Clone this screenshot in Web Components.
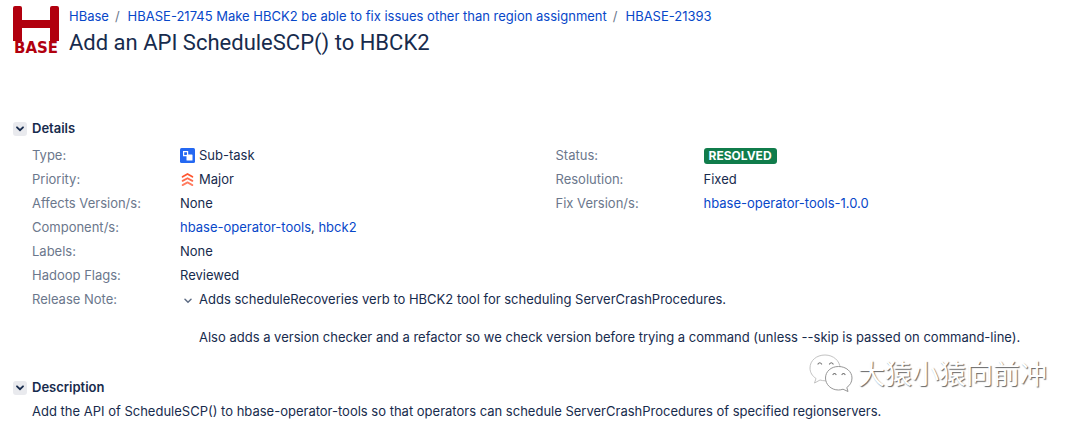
<!DOCTYPE html>
<html lang="en">
<head>
<meta charset="utf-8">
<title>HBASE-21393</title>
<style>
body{margin:0;background:#fff;color:#172b4d;font:13px/19px Inter,"Noto Sans",sans-serif}
</style>
</head>
<body>
<issue-page></issue-page>
<script>
const define=(name,html)=>{
  const t=document.createElement('template');
  t.innerHTML=html;
  customElements.define(name,class extends HTMLElement{
    constructor(){
      super();
      this.attachShadow({mode:'open'}).append(t.content.cloneNode(true));
    }
  });
};

define('hbase-logo',`<style>
:host{display:flex;flex-direction:column;width:46px;color:#b1000e}
svg{display:block;width:46px;height:35px}
span{font:700 15px/15px "DejaVu Sans",sans-serif;text-align:center}
</style>
<svg viewBox="0 0 46 35" aria-hidden="true"><path fill="currentColor" d="M2 0h5q2 0 2 2v12h28V2q0-2 2-2h5q2 0 2 2v33h-9V22H9v13H0V2q0-2 2-2z"/></svg>
<span>BASE</span>`);

define('text-link',`<style>
:host{display:inline}
a{color:#0747c9;text-decoration:none}
a:hover{text-decoration:underline}
</style><a href="#"><slot></slot></a>`);

define('issue-header',`<style>
:host{display:flex;gap:10px;align-items:flex-start}
hbase-logo{flex:none}
nav{display:flex;gap:8px;line-height:20px}
.sep{color:#6b778c;margin-left:-2px}
h1{margin:0;font:400 22px/34px Roboto,sans-serif}
</style>
<hbase-logo></hbase-logo>
<div>
<nav aria-label="Breadcrumb"><text-link>HBase</text-link><span class="sep">/</span><text-link>HBASE-21745 Make HBCK2 be able to fix issues other than region assignment</text-link><span class="sep">/</span><text-link>HBASE-21393</text-link></nav>
<h1><slot></slot></h1>
</div>`);

define('issue-section',`<style>
:host{display:block;position:relative}
header{display:flex;align-items:center;gap:5px}
button{display:flex;align-items:center;justify-content:center;width:14px;height:14px;padding:0;border:0;border-radius:3px;background:#e9eaee;color:#172b4d}
h2{margin:0;font-size:13px;line-height:19px;font-weight:600}
.body{padding:5px 0 0 19px}
</style>
<header><button type="button" aria-label="Toggle section"><svg width="8" height="6" viewBox="0 0 8 6" aria-hidden="true"><path d="M1 1.3 4 4.2 7 1.3" fill="none" stroke="currentColor" stroke-width="1.8" stroke-linecap="round"/></svg></button><h2><slot name="heading"></slot></h2></header>
<div class="body"><slot></slot></div>`);

define('issue-field',`<style>
:host{display:grid;grid-template-columns:148px 1fr}
.label{color:#6b778c}
.value{display:flex;gap:4px;align-items:center}
</style>
<span class="label" id="label"><slot name="label"></slot></span>
<div class="value" role="group" aria-labelledby="label"><slot></slot></div>`);

define('subtask-icon',`<style>:host,svg{display:block}</style>
<svg width="15" height="15" viewBox="0 0 15 15" aria-hidden="true"><rect width="15" height="15" rx="1.5" fill="#2468f2"/><path d="M3.6 3.6h4v4h-4z" fill="none" stroke="#fff" stroke-width="1.2"/><rect x="6.5" y="6.5" width="6" height="6" rx=".6" fill="#fff"/></svg>`);

define('major-icon',`<style>:host,svg{display:block}</style>
<svg width="15" height="15" viewBox="0 0 15 15" aria-hidden="true"><g fill="none" stroke-width="1.8" stroke-linecap="round" stroke-linejoin="round"><path stroke="#ff5630" d="M2.6 4.7 7.5 2l4.9 2.7"/><path stroke="#ff6b4c" d="M2.6 8.9 7.5 6.2l4.9 2.7"/><path stroke="#ff7d62" d="M2.6 13.1 7.5 10.4l4.9 2.7"/></g></svg>`);

define('status-badge',`<style>
:host{display:block;padding:0 5px;border-radius:3px;background:#107c4b;color:#fff;font-size:12px;line-height:16px;font-weight:700}
</style><slot></slot>`);

define('release-note',`<style>
:host{display:grid;grid-template-columns:15px 1fr;gap:4px}
button{display:flex;align-items:center;justify-content:center;height:19px;padding:2px 0 0;border:0;background:none;color:#5e6c84}
p{margin:0 0 19px}
p:last-child{margin:0}
</style>
<button type="button" aria-label="Toggle release note"><svg width="8" height="6" viewBox="0 0 8 6" aria-hidden="true"><path d="M1 1.3 4 4.2 7 1.3" fill="none" stroke="currentColor" stroke-width="1.5" stroke-linecap="round"/></svg></button>
<div><p>Adds scheduleRecoveries verb to HBCK2 tool for scheduling ServerCrashProcedures.</p><p>Also adds a version checker and a refactor so we check version before trying a command (unless --skip is passed on command-line).</p></div>`);

define('channel-watermark',`<style>
:host{display:flex;align-items:center;gap:5px;color:#fff;font:27px/36px "Noto Sans CJK SC",sans-serif;text-shadow:1px 1px 1px #666;white-space:nowrap}
svg{display:block}
</style>
<svg width="44" height="38" viewBox="0 0 44 38" aria-hidden="true"><g fill="#fff" stroke="#8a8a8a" stroke-width=".9" stroke-linejoin="round"><path d="M16 1C7.500 1 1 6.500 1 14c0 4.500 2.300 8 6 10.500L5.500 29l5.500-3c1.700.5 3.500.8 5.500.8C25 26.800 31 21 31 14S24.500 1 16 1z" stroke="#bbb"/><path d="M29.500 12.500c-7.500 0-13 5-13 11.500s5.500 12 13 12c1.700 0 3-.3 4.500-.8l5 2.300-1.200-4C41 31.300 43 28 43 24c0-6.500-6-11.500-13.500-11.500z"/></g><g fill="none" stroke="#777" stroke-width="1.200" stroke-linecap="round"><path d="M9 10q1.800-2.500 3.600 0M20.500 10q1.800-2.500 3.600 0M24 20.500q1.500-2 3 0M33 20.500q1.500-2 3 0"/></g></svg>
<span lang="zh">大猿小猿向前冲</span>`);

define('issue-page',`<style>
:host{display:block;padding:6px 13px 0}
.details{margin-top:59px}
.columns{display:grid;grid-template-columns:1fr 1fr;column-gap:12px;align-items:start}
.list{display:grid;gap:5px;padding-top:3px}
.note{margin-top:5px}
.description{margin-top:31px}
channel-watermark{position:absolute;right:20px;top:-24px}
p{margin:0}
</style>
<issue-header>Add an API ScheduleSCP() to HBCK2</issue-header>
<main>
<issue-section class="details"><span slot="heading">Details</span>
<div class="columns">
<div class="list">
<issue-field><span slot="label">Type:</span><subtask-icon></subtask-icon><span>Sub-task</span></issue-field>
<issue-field><span slot="label">Priority:</span><major-icon></major-icon><span>Major</span></issue-field>
<issue-field><span slot="label">Affects Version/s:</span><span>None</span></issue-field>
<issue-field><span slot="label">Component/s:</span><span><text-link>hbase-operator-tools</text-link>, <text-link>hbck2</text-link></span></issue-field>
<issue-field><span slot="label">Labels:</span><span>None</span></issue-field>
<issue-field><span slot="label">Hadoop Flags:</span><span>Reviewed</span></issue-field>
</div>
<div class="list">
<issue-field><span slot="label">Status:</span><status-badge>RESOLVED</status-badge></issue-field>
<issue-field><span slot="label">Resolution:</span><span>Fixed</span></issue-field>
<issue-field><span slot="label">Fix Version/s:</span><text-link>hbase-operator-tools-1.0.0</text-link></issue-field>
</div>
</div>
<issue-field class="note"><span slot="label">Release Note:</span><release-note></release-note></issue-field>
</issue-section>
<issue-section class="description"><span slot="heading">Description</span>
<p>Add the API of ScheduleSCP() to hbase-operator-tools so that operators can schedule ServerCrashProcedures of specified regionservers.</p>
<channel-watermark></channel-watermark>
</issue-section>
</main>`);
</script>
</body>
</html></script>
